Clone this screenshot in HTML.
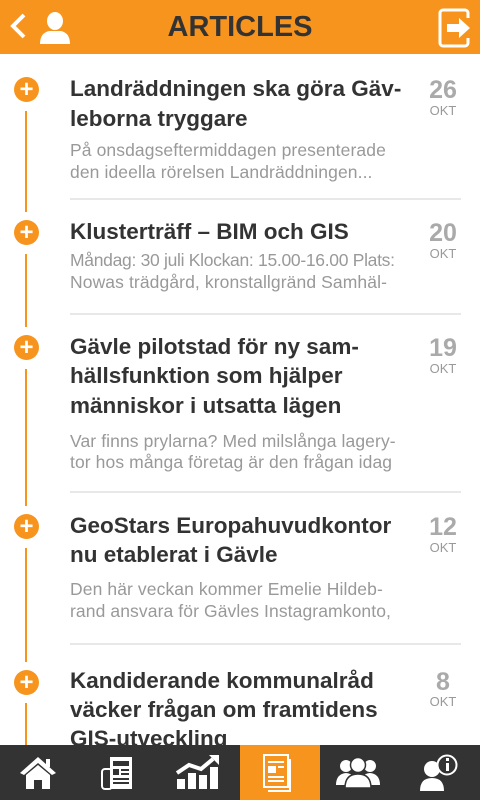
<!DOCTYPE html>
<html><head><meta charset="utf-8"><style>
*{margin:0;padding:0;box-sizing:border-box}
body{width:480px;height:800px;overflow:hidden;background:#fff;font-family:"Liberation Sans",sans-serif;position:relative}
.hdr{position:absolute;left:0;top:0;width:480px;height:54px;background:#f7941d}
.hdr h1{position:absolute;left:0;right:0;top:11px;text-align:center;font-size:29px;font-weight:bold;color:#333;letter-spacing:0}
.tl{position:absolute;left:25px;width:2px;background:#f7941d}
.dot{position:absolute;left:14px;width:25px;height:25px;border-radius:50%;background:#f7941d;color:#fff;font-weight:bold;font-size:24px;line-height:25px;text-align:center}
.l{position:absolute;left:70px;white-space:nowrap}
.t{font-size:22.5px;font-weight:bold;color:#333;letter-spacing:0}
.d{font-size:17.5px;color:#999;letter-spacing:0.1px}
.dn{position:absolute;left:420px;width:46px;text-align:center;font-size:25px;font-weight:bold;color:#aaa}
.mo{position:absolute;left:420px;width:46px;text-align:center;font-size:13px;color:#999}
.sep{position:absolute;left:70px;width:391px;height:2px;background:#e8e8e8}
.nav{position:absolute;left:0;top:745px;width:480px;height:55px;background:#333}
.nav .a{position:absolute;left:240px;top:0;width:80px;height:55px;background:#f7941d}
</style></head><body>
<div class="hdr">
<svg style="position:absolute;left:8px;top:12px" width="20" height="28"><path d="M16 3 L5 14 L16 25" stroke="#fff" stroke-width="4" fill="none"/></svg>
<svg style="position:absolute;left:38px;top:10px" width="34" height="34"><ellipse cx="17" cy="11" rx="8" ry="9" fill="#fff"/><path d="M2 34 Q2 23 11 21 L23 21 Q32 23 32 34Z" fill="#fff"/></svg>
<h1>ARTICLES</h1>
<svg style="position:absolute;left:438px;top:8px" width="36" height="40"><rect x="2" y="2" width="28" height="36" rx="3" stroke="#fff" stroke-width="3" fill="none"/><rect x="25" y="10" width="7" height="20" fill="#f7941d"/><path d="M9 16 H21 V10 L32 20 L21 30 V24 H9Z" fill="#fff"/></svg>
</div>

<div class="tl" style="top:111px;height:101px"></div>
<div class="tl" style="top:254px;height:73px"></div>
<div class="tl" style="top:369px;height:137px"></div>
<div class="tl" style="top:548px;height:114px"></div>
<div class="tl" style="top:703px;height:42px"></div>

<div class="dot" style="top:77px">+</div>
<div class="l t" style="top:76px">Landräddningen ska göra Gäv-</div>
<div class="l t" style="top:106px">leborna tryggare</div>
<div class="l d" style="top:140px">På onsdagseftermiddagen presenterade</div>
<div class="l d" style="top:162px">den ideella rörelsen Landräddningen...</div>
<div class="dn" style="top:76px">26</div><div class="mo" style="top:103px">OKT</div>
<div class="sep" style="top:198px"></div>

<div class="dot" style="top:220px">+</div>
<div class="l t" style="top:219px">Klusterträff – BIM och GIS</div>
<div class="l d" style="top:250px;letter-spacing:-0.3px">Måndag: 30 juli Klockan: 15.00-16.00 Plats:</div>
<div class="l d" style="top:272px">Nowas trädgård, kronstallgränd Samhäl-</div>
<div class="dn" style="top:219px">20</div><div class="mo" style="top:246px">OKT</div>
<div class="sep" style="top:313px"></div>

<div class="dot" style="top:335px">+</div>
<div class="l t" style="top:334px">Gävle pilotstad för ny sam-</div>
<div class="l t" style="top:363px">hällsfunktion som hjälper</div>
<div class="l t" style="top:393px">människor i utsatta lägen</div>
<div class="l d" style="top:431px">Var finns prylarna? Med milslånga lagery-</div>
<div class="l d" style="top:452px">tor hos många företag är den frågan idag</div>
<div class="dn" style="top:334px">19</div><div class="mo" style="top:361px">OKT</div>
<div class="sep" style="top:491px"></div>

<div class="dot" style="top:514px">+</div>
<div class="l t" style="top:513px">GeoStars Europahuvudkontor</div>
<div class="l t" style="top:542px">nu etablerat i Gävle</div>
<div class="l d" style="top:579px">Den här veckan kommer Emelie Hildeb-</div>
<div class="l d" style="top:601px">rand ansvara för Gävles Instagramkonto,</div>
<div class="dn" style="top:513px">12</div><div class="mo" style="top:540px">OKT</div>
<div class="sep" style="top:643px"></div>

<div class="dot" style="top:670px">+</div>
<div class="l t" style="top:668px">Kandiderande kommunalråd</div>
<div class="l t" style="top:697px">väcker frågan om framtidens</div>
<div class="l t" style="top:726px">GIS-utveckling</div>
<div class="dn" style="top:668px">8</div><div class="mo" style="top:694px">OKT</div>

<div class="nav"><div class="a"></div>
<svg style="position:absolute;left:18px;top:10px" width="40" height="36"><path d="M2 18 L20 2 L38 18 L34 20 L20 8 L6 20Z" fill="#fff"/><rect x="28" y="4" width="4" height="8" fill="#fff"/><path d="M8 20 L20 10 L32 20 V34 H24 V25 H16 V34 H8Z" fill="#fff"/></svg>
<svg style="position:absolute;left:100px;top:10px" width="36" height="36"><rect x="10" y="2" width="22" height="32" fill="#fff"/><rect x="2" y="14" width="10" height="20" rx="3" stroke="#fff" stroke-width="2" fill="none"/><rect x="13" y="6" width="16" height="5" fill="#333"/><rect x="13" y="14" width="6" height="6" fill="#333"/><rect x="21" y="14" width="8" height="2" fill="#333"/><rect x="21" y="18" width="8" height="2" fill="#333"/><rect x="13" y="23" width="16" height="2" fill="#333"/><rect x="13" y="27" width="16" height="2" fill="#333"/></svg>
<svg style="position:absolute;left:175px;top:8px" width="46" height="38"><path d="M2 20 L14 12 L26 16 L38 6" stroke="#fff" stroke-width="4" fill="none"/><path d="M34 2 H44 V12Z" fill="#fff"/><rect x="2" y="26" width="8" height="10" fill="#fff"/><rect x="13" y="20" width="8" height="16" fill="#fff"/><rect x="24" y="22" width="8" height="14" fill="#fff"/><rect x="35" y="14" width="8" height="22" fill="#fff"/></svg>
<svg style="position:absolute;left:262px;top:8px" width="34" height="40"><rect x="2" y="2" width="24" height="32" stroke="#fff" stroke-width="2" fill="none"/><path d="M28 6 V38 H6" stroke="#fff" stroke-width="2" fill="none"/><rect x="6" y="8" width="16" height="2" fill="#fff"/><rect x="6" y="13" width="8" height="7" fill="#fff"/><rect x="16" y="13" width="6" height="2" fill="#fff"/><rect x="6" y="23" width="16" height="2" fill="#fff"/><rect x="6" y="27" width="16" height="2" fill="#fff"/></svg>
<svg style="position:absolute;left:336px;top:12px" width="44" height="32"><circle cx="10" cy="9" r="6" fill="#fff"/><circle cx="34" cy="9" r="6" fill="#fff"/><path d="M0 28 Q0 17 10 16 Q20 17 20 28Z M24 28 Q24 17 34 16 Q44 17 44 28Z" fill="#fff"/><circle cx="22" cy="8" r="7.5" fill="#fff" stroke="#333" stroke-width="1.5"/><path d="M9 31 Q9 17 22 17 Q35 17 35 31Z" fill="#fff" stroke="#333" stroke-width="1.5"/></svg>
<svg style="position:absolute;left:418px;top:8px" width="42" height="40"><circle cx="14" cy="16" r="8" fill="#fff"/><path d="M2 38 Q2 25 14 25 Q26 25 26 38Z" fill="#fff"/><circle cx="29" cy="12" r="9.5" stroke="#fff" stroke-width="2" fill="#333"/><rect x="28" y="10" width="3" height="8" fill="#fff"/><rect x="28" y="5" width="3" height="3" fill="#fff"/></svg>
</div>
</body></html>
